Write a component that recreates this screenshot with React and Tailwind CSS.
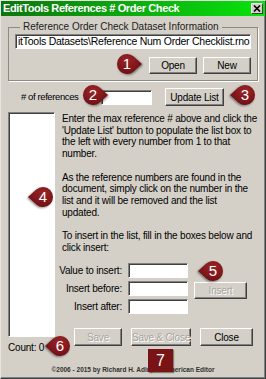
import React from "react";

const ui = { fontFamily: '"Liberation Sans", Arial, sans-serif' };

const help = [
  ["Enter the max reference # above and click the", "'Update List' button to populate the list box to", "the left with every number from 1 to that", "number."],
  ["As the reference numbers are found in the", "document, simply click on the number in the", "list and it will be removed and the list", "updated."],
  ["To insert in the list, fill in the boxes below and", "click insert:"],
];

function Btn({ children, disabled, className = "" }) {
  return (
    <button
      disabled={disabled}
      className={`flex items-center justify-center whitespace-nowrap bg-[#d4d0c8] border border-t-white border-l-white border-r-[#404040] border-b-[#404040] shadow-[inset_-1px_-1px_0_#808080] text-[10px] tracking-[-0.2px] ${
        disabled ? "text-[#a8a59e] [text-shadow:1px_1px_0_white]" : "text-black"
      } ${className}`}
    >
      {children}
    </button>
  );
}

function Field({ className = "" }) {
  return (
    <div
      className={`bg-white border border-t-[#808080] border-l-[#808080] border-r-white border-b-white shadow-[inset_1px_1px_0_#404040] ${className}`}
    />
  );
}

function Pin({ n, left, className = "" }) {
  return (
    <div className={`absolute w-[27px] h-[24px] ${className}`}>
      <svg
        width="27"
        height="24"
        viewBox="0 0 27 24"
        className={`absolute inset-0 drop-shadow-[1px_1px_1px_rgba(0,0,0,0.45)] ${left ? "-scale-x-100" : ""}`}
      >
        <defs>
          <radialGradient id={`g${n}`} cx="0.4" cy="0.3" r="0.8">
            <stop offset="0" stopColor="#9a2428" />
            <stop offset="1" stopColor="#6a0d10" />
          </radialGradient>
        </defs>
        <path d="M26 12 L17.7 4.6 A10 10 0 1 0 17.7 19.4 Z" fill={`url(#g${n})`} />
      </svg>
      <span
        className={`absolute top-0 h-[24px] w-[22px] flex items-center justify-center text-white text-[15px] ${
          left ? "right-0" : "left-0"
        }`}
      >
        {n}
      </span>
    </div>
  );
}

export default function App() {
  return (
    <div
      style={ui}
      className="relative w-[266px] h-[379px] bg-[#d4d0c8] border border-t-[#e8e6e0] border-l-[#e8e6e0] border-r-[#404040] border-b-[#404040] shadow-[inset_-1px_-1px_0_#808080] overflow-hidden"
    >
      <div className="flex items-center justify-between h-[15px] bg-gradient-to-r from-[#0c760e] to-[#06e40a] pl-[2px] pr-[2px]">
        <span className="text-white font-bold text-[11px] tracking-[-0.4px] leading-none">
          EditTools References # Order Check
        </span>
        <div className="w-[12px] h-[11px] bg-[#d4d0c8] border border-t-white border-l-white border-r-[#404040] border-b-[#404040] flex items-center justify-center">
          <svg width="8" height="7" viewBox="0 0 8 7">
            <path d="M1 0.5 L7 6.5 M7 0.5 L1 6.5" stroke="black" strokeWidth="1.6" />
          </svg>
        </div>
      </div>

      <fieldset className="min-w-0 mx-[7px] mt-[5px] h-[60px] border border-[#8e8b85] shadow-[1px_1px_0_white] px-[6px]">
        <legend className="ml-[5px] px-[3px] text-[10px] leading-[12px] text-[#202020]">
          Reference Order Check Dataset Information
        </legend>
        <div className="mt-[1px] h-[15px] bg-white border border-t-[#808080] border-l-[#808080] border-r-white border-b-white shadow-[inset_1px_1px_0_#404040] overflow-hidden flex items-center pl-[2px]">
          <span className="text-[10.5px] whitespace-nowrap tracking-[-0.25px]">
            itTools Datasets\Reference Num Order Checklist.rno
          </span>
        </div>
        <div className="flex justify-end gap-[6px] mt-[8px]">
          <Btn className="w-[48px] h-[17px]">Open</Btn>
          <Btn className="w-[48px] h-[17px]">New</Btn>
        </div>
      </fieldset>

      <div className="flex items-center mt-[7px] h-[18px]">
        <span className="ml-[20px] w-[56px] whitespace-nowrap text-[9.5px] tracking-[-0.4px]">
          # of references
        </span>
        <Field className="ml-[24px] w-[51px] h-[15px]" />
        <Btn className="ml-[13px] w-[59px] h-[18px]">Update List</Btn>
      </div>

      <div className="flex mt-[6px] pl-[7px]">
        <div className="flex flex-col">
          <Field className="w-[47px] h-[225px]" />
          <span className="mt-[3px] text-[10px] tracking-[-0.2px] whitespace-nowrap">Count: 0</span>
        </div>
        <div className="flex flex-col ml-[7px]">
          <div className="flex flex-col gap-[11.7px] text-[10px] leading-[11.7px] tracking-[-0.2px] whitespace-nowrap mt-[1px]">
            {help.map((para, i) => (
              <p key={i}>
                {para.map((line) => (
                  <span key={line} className="block">
                    {line}
                  </span>
                ))}
              </p>
            ))}
          </div>
          <div className="flex mt-[10px]">
            <div className="flex flex-col gap-[3px] items-end text-[10px] tracking-[-0.2px] w-[60px] whitespace-nowrap">
              <span className="h-[15px] flex items-center">Value to insert:</span>
              <span className="h-[15px] flex items-center">Insert before:</span>
              <span className="h-[15px] flex items-center">Insert after:</span>
            </div>
            <div className="flex flex-col gap-[3px] ml-[6px]">
              <Field className="w-[60px] h-[15px]" />
              <Field className="w-[60px] h-[15px]" />
              <Field className="w-[60px] h-[15px]" />
            </div>
            <Btn disabled className="ml-[6px] mt-[19px] w-[53px] h-[17px]">
              Insert
            </Btn>
          </div>
          <div className="flex gap-[9px] mt-[14px] ml-[12px]">
            <Btn disabled className="w-[48px] h-[18px]">Save</Btn>
            <Btn disabled className="w-[60px] h-[18px]">Save &amp; Close</Btn>
            <Btn className="w-[53px] h-[18px]">Close</Btn>
          </div>
        </div>
      </div>

      <div className="text-center text-[6.5px] font-bold text-[#303030] mt-[10px]">
        ©2006 - 2015 by Richard H. Adin, An American Editor
      </div>

      <Pin n="1" className="left-[115px] top-[51px]" />
      <Pin n="2" className="left-[81px] top-[82px]" />
      <Pin n="3" left className="left-[228px] top-[82px]" />
      <Pin n="4" left className="left-[26px] top-[184px]" />
      <Pin n="5" left className="left-[196px] top-[258px]" />
      <Pin n="6" left className="left-[43px] top-[333px]" />
      <div className="absolute left-[147px] top-[348px] w-[25px] h-[23px] bg-[#7a1316] shadow-[1px_1px_1px_rgba(0,0,0,0.4)] flex items-center justify-center text-white text-[16px]">
        7
      </div>
    </div>
  );
}
